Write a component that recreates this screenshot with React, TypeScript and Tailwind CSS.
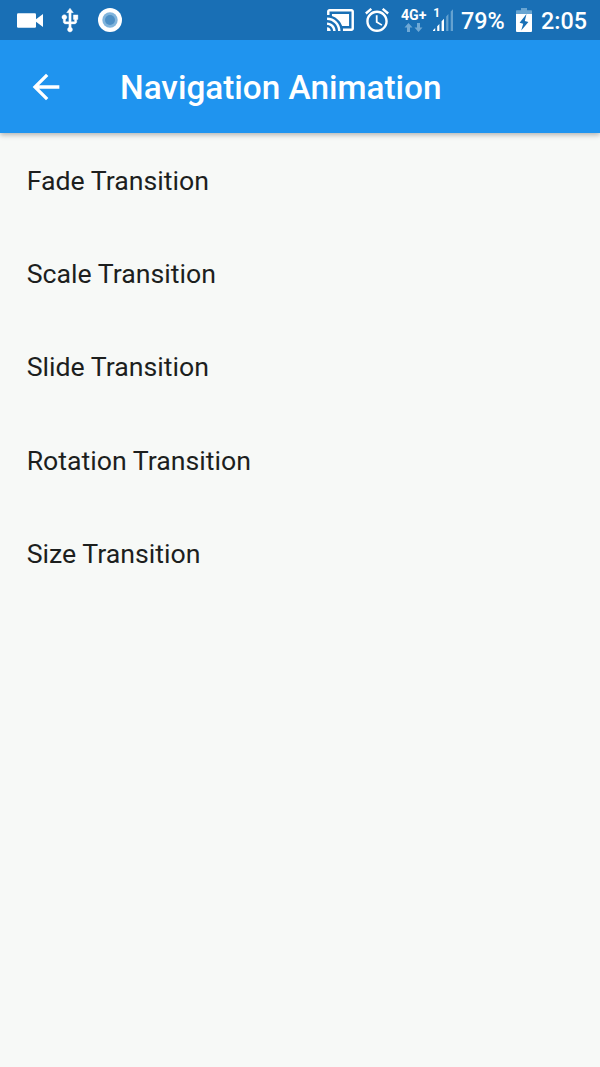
const transitions = [
  "Fade Transition",
  "Scale Transition",
  "Slide Transition",
  "Rotation Transition",
  "Size Transition",
];

function StatusBar() {
  return (
    <div className="flex h-10 items-center bg-[#196fb5] pl-[17px] pr-[13px] text-[23.33px] font-medium leading-10 text-white">
      <svg className="h-[15px] w-[26px]" viewBox="0 0 26 15" fill="currentColor">
        <rect x="0" y="0.3" width="19" height="14.4" rx="1.2" />
        <path d="M19 6.3 26 1v13l-7-5.3z" />
      </svg>
      <svg className="ml-[13.4px] h-[27px] w-[28px]" viewBox="0 0 24 24" fill="currentColor" stroke="currentColor" strokeWidth="0.35">
        <path d="M15 7v4h1v2h-3V5h2l-3-4-3 4h2v8H8v-2.07c.7-.37 1.2-1.08 1.2-1.93 0-1.21-.99-2.2-2.2-2.2S4.8 7.79 4.8 9c0 .85.5 1.56 1.2 1.93V13c0 1.11.89 2 2 2h3v3.05c-.71.37-1.2 1.1-1.2 1.95 0 1.22.99 2.2 2.2 2.2s2.2-.98 2.2-2.2c0-.85-.49-1.58-1.2-1.95V15h3c1.11 0 2-.89 2-2v-2h1V7h-4z" />
      </svg>
      <svg className="ml-[13.6px] h-6 w-6" viewBox="0 0 24 24">
        <circle cx="12" cy="12" r="12" fill="#fff" />
        <circle cx="12" cy="12" r="7.7" fill="#80b4dc" />
        <circle cx="12" cy="12" r="5" fill="#4d8fc5" />
      </svg>

      <div className="ml-auto flex items-center">
        <svg className="h-[22px] w-[27px]" viewBox="1 3 22 18" fill="currentColor">
          <path d="M1 18v3h3c0-1.66-1.34-3-3-3zm0-4v2c2.76 0 5 2.24 5 5h2c0-3.87-3.13-7-7-7zm18-7H5v1.63c3.96 1.28 7.09 4.41 8.37 8.37H19V7zM1 10v2c4.97 0 9 4.03 9 9h2c0-6.08-4.93-11-11-11zm20-7H3c-1.1 0-2 .9-2 2v3h2V5h18v14h-7v2h7c1.1 0 2-.9 2-2V5c0-1.1-.9-2-2-2z" />
        </svg>
        <svg className="ml-[11px] h-6 w-6" viewBox="2 1.9 20 20.1" fill="currentColor">
          <path d="M22 5.72l-4.6-3.86-1.29 1.53 4.6 3.86L22 5.72zM7.88 3.39L6.6 1.86 2 5.71l1.29 1.53 4.59-3.85zM12.5 8H11v6l4.75 2.85.75-1.23-4-2.37V8zM12 4c-4.97 0-9 4.03-9 9s4.02 9 9 9c4.97 0 9-4.03 9-9s-4.03-9-9-9zm0 16c-3.87 0-7-3.13-7-7s3.13-7 7-7 7 3.13 7 7-3.13 7-7 7z" />
        </svg>
        <svg className="ml-[11.5px] h-10 w-[26px]" viewBox="0 0 26 40" fill="currentColor">
          <text x="0" y="20" fontSize="15" fontWeight="700" textLength="25.5" lengthAdjust="spacingAndGlyphs">4G+</text>
          <g fill="#70a9d5">
            <path d="M7.5 23l4 4.4H9V32H6v-4.6H3.5z" />
            <path d="M17.5 32l-4-4.4H16V23h3v4.6h2.5z" />
          </g>
        </svg>
        <svg className="ml-[6px] h-10 w-5" viewBox="0 0 20 40" fill="currentColor">
          <text x="0.2" y="17" fontSize="12" fontWeight="700">1</text>
          <path d="M0 31v-.8L2.2 28v3zM4.2 31v-4.8L6.4 24v7zM8.6 31v-9.8l2.4-2.4V31z" />
          <path fill="#65a2d0" d="M13.2 31V16.4l2.2-2.3V31zM17.7 31V11.6L20 9.2V31z" />
        </svg>
        <span className="ml-[8.5px] w-[43px] whitespace-nowrap pt-[2px]">79%</span>
        <svg className="ml-3 h-6 w-4" viewBox="0 0 16 24">
          <path fill="#69a5d2" d="M0 6.5V3q0-.8.8-.8H5V0h6v2.2h4.2q.8 0 .8.8v3.5z" />
          <path fill="#fff" d="M0 6h16v17q0 1-1 1H1q-1 0-1-1z" />
          <path fill="#196fb5" d="M10.5 6 3.6 14.8l3.6 1L5.2 22.5l7.2-8.6-3.6-1z" />
        </svg>
        <span className="ml-[9px] w-[46px] whitespace-nowrap pt-[2px]">2:05</span>
      </div>
    </div>
  );
}

export default function App() {
  return (
    <div className="flex h-[1067px] w-[600px] flex-col overflow-hidden bg-[#f7f9f7] font-['Roboto',sans-serif]">
      <header className="z-10 shrink-0 bg-[#1f94ef] shadow-[0_2px_5px_rgba(0,0,0,0.28)]">
        <StatusBar />
        <div className="flex h-[93.33px] items-center pl-[26px] text-white">
          <button aria-label="Back" className="h-10 w-10">
            <svg className="h-10 w-10" viewBox="0 0 24 24" fill="currentColor">
              <path d="M20 11H7.83l5.59-5.59L12 4l-8 8 8 8 1.41-1.41L7.83 13H20v-2z" />
            </svg>
          </button>
          <h1 className="ml-[54px] whitespace-nowrap pt-[2px] text-[33.33px] font-medium leading-10">
            Navigation Animation
          </h1>
        </div>
      </header>
      <ul className="pt-[0.5px]">
        {transitions.map((label) => (
          <li key={label} className="flex h-[93.4px] items-center px-[26.67px] text-[26.7px] leading-8 text-[#1d1f1e]">
            {label}
          </li>
        ))}
      </ul>
    </div>
  );
}
